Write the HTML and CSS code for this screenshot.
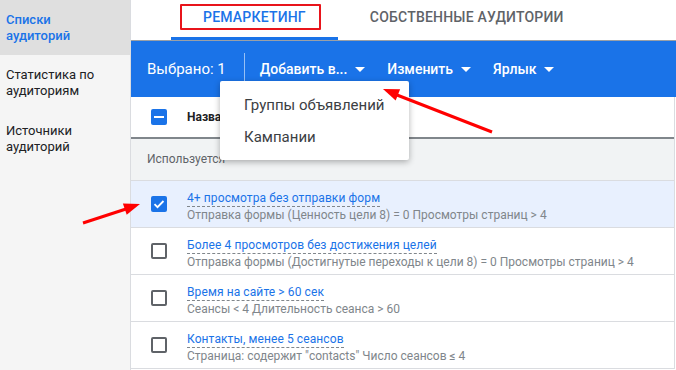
FILE: index.html
```html
<!DOCTYPE html>
<html lang="ru">
<head>
  <meta charset="UTF-8">
  <meta name="viewport" content="width=device-width, initial-scale=1.0">
  <title>Аудитории</title>
  <link rel="stylesheet" href="styles.css">
</head>
<body>
  <div class="page">
    <aside class="sidebar">
      <div class="nav-item active">Списки<br>аудиторий</div>
      <div class="nav-item">Статистика по<br>аудиториям</div>
      <div class="nav-item">Источники<br>аудиторий</div>
    </aside>

    <main class="main">
      <div class="tabs">
        <div class="tab active">Ремаркетинг<span class="mark-box"></span></div>
        <div class="tab">Собственные аудитории</div>
      </div>

      <div class="toolbar">
        <span class="selected-count">Выбрано: 1</span>
        <span class="divider"></span>
        <div class="tb-btn first">Добавить в...<span class="caret"></span></div>
        <div class="tb-btn">Изменить<span class="caret"></span></div>
        <div class="tb-btn">Ярлык<span class="caret"></span></div>

        <div class="dropdown">
          <div class="dropdown-item">Группы объявлений</div>
          <div class="dropdown-item">Кампании</div>
        </div>
      </div>

      <div class="table">
        <div class="row head">
          <span class="checkbox partial"></span>
          <span class="col-name">Название</span>
        </div>
        <div class="group">Используется</div>

        <div class="row item selected">
          <span class="checkbox checked">
            <svg viewBox="0 0 16 16" width="16" height="16"><path d="M3.5 8.2l3 3 6-6.2" fill="none" stroke="#fff" stroke-width="1.8"/></svg>
          </span>
          <div class="item-text">
            <span class="item-title">4+ просмотра без отправки форм</span>
            <div class="item-sub">Отправка формы (Ценность цели 8) = 0 Просмотры страниц &gt; 4</div>
          </div>
        </div>

        <div class="row item">
          <span class="checkbox"></span>
          <div class="item-text">
            <span class="item-title">Более 4 просмотров без достижения целей</span>
            <div class="item-sub">Отправка формы (Достигнутые переходы к цели 8) = 0 Просмотры страниц &gt; 4</div>
          </div>
        </div>

        <div class="row item">
          <span class="checkbox"></span>
          <div class="item-text">
            <span class="item-title">Время на сайте &gt; 60 сек</span>
            <div class="item-sub">Сеансы &lt; 4 Длительность сеанса &gt; 60</div>
          </div>
        </div>

        <div class="row item">
          <span class="checkbox"></span>
          <div class="item-text">
            <span class="item-title">Контакты, менее 5 сеансов</span>
            <div class="item-sub">Страница: содержит "contacts" Число сеансов ≤ 4</div>
          </div>
        </div>
      </div>
    </main>
  </div>

  <!-- red annotation arrows -->
  <svg class="annotations" width="676" height="370" viewBox="0 0 676 370">
    <line x1="492" y1="132" x2="397" y2="95" stroke="#f00" stroke-width="3"/>
    <polygon points="383,89 400.1,89.3 395.7,100.5" fill="#f00"/>
    <line x1="83" y1="223" x2="126" y2="209" stroke="#f00" stroke-width="3"/>
    <polygon points="140,204 126.7,214.8 122.9,203.4" fill="#f00"/>
  </svg>
</body>
</html>
```

FILE: styles.css
```css
body {
  margin: 0;
  font-family: Roboto, "Liberation Sans", Arial, sans-serif;
  color: #202124;
  background-color: #fff;
  overflow: hidden;
}
.page {
  display: flex;
  width: 676px;
  height: 370px;
}
.sidebar {
  width: 130px;
  flex-shrink: 0;
  background-color: #f5f5f5;
}
.nav-item {
  padding: 12px 6px;
  font-size: 13px;
  line-height: 16px;
  color: #202124;
}
.nav-item.active {
  background-color: #dfdfdf;
  color: #1a73e8;
  font-weight: 500;
  padding-bottom: 11px;
}
.main {
  flex: 1;
  border-left: 1px solid #dadce0;
  min-width: 0;
}
.tabs {
  display: flex;
  height: 40px;
  padding-left: 40px;
  border-bottom: 1px solid #9aa0a6;
}
.tab {
  position: relative;
  padding: 9px 32px 0;
  font-size: 14px;
  font-weight: 500;
  line-height: 16px;
  letter-spacing: 0.2px;
  text-transform: uppercase;
  color: #5f6368;
  box-sizing: border-box;
}
.tab.active {
  color: #1a73e8;
  border-bottom: 3px solid #1a73e8;
}
.mark-box {
  position: absolute;
  left: 9px;
  top: 4px;
  width: 137px;
  height: 22px;
  border: 2px solid #e8141b;
  border-radius: 1px;
}
.toolbar {
  position: relative;
  display: flex;
  align-items: center;
  height: 56px;
  padding-left: 16px;
  background-color: #1a73e8;
  color: #fff;
}
.selected-count {
  font-size: 15px;
}
.divider {
  width: 1px;
  height: 32px;
  margin-left: 18px;
  background-color: rgba(255, 255, 255, 0.55);
}
.tb-btn {
  display: flex;
  align-items: center;
  padding: 0 11px;
  font-size: 14px;
  font-weight: 500;
}
.tb-btn.first {
  margin-left: 4px;
}
.caret {
  width: 0;
  height: 0;
  margin-left: 8px;
  border-left: 5px solid transparent;
  border-right: 5px solid transparent;
  border-top: 5px solid #fff;
}
.dropdown {
  position: absolute;
  left: 89px;
  top: 40px;
  width: 189px;
  padding: 8px 0 7px;
  background-color: #fff;
  border-radius: 2px;
  box-shadow: 0 2px 6px rgba(0, 0, 0, 0.3);
  z-index: 2;
}
.dropdown-item {
  padding: 0 24px;
  height: 32px;
  line-height: 32px;
  font-size: 15px;
  color: #3c4043;
}
.table {
  margin-right: 1px;
  border-right: 1px solid #dadce0;
}
.row {
  display: flex;
  align-items: center;
  padding-left: 20px;
}
.row.head {
  height: 40px;
  border-bottom: 2px solid #80868b;
}
.col-name {
  margin-left: 20px;
  font-size: 12px;
  font-weight: 700;
  color: #202124;
}
.group {
  height: 41px;
  line-height: 41px;
  padding-left: 16px;
  font-size: 12px;
  color: #5f6368;
  background-color: #f1f3f4;
  border-bottom: 1px solid #dadce0;
}
.row.item {
  height: 46px;
  border-bottom: 1px solid #dadce0;
}
.row.item.selected {
  background-color: #e8f0fe;
}
.checkbox {
  width: 16px;
  height: 16px;
  box-sizing: border-box;
  border: 2px solid #5f6368;
  border-radius: 2px;
  flex-shrink: 0;
}
.checkbox.checked,
.checkbox.partial {
  position: relative;
  border: none;
  background-color: #1a73e8;
}
.checkbox.checked svg {
  display: block;
}
.checkbox.partial::after {
  content: "";
  position: absolute;
  left: 3px;
  right: 3px;
  top: 7px;
  height: 2px;
  background-color: #fff;
}
.item-text {
  margin-left: 20px;
  padding-top: 1px;
}
.item-title {
  display: inline-block;
  font-size: 12px;
  line-height: 15px;
  letter-spacing: 0.1px;
  color: #1a73e8;
  border-bottom: 1px dashed #80868b;
}
.item-sub {
  font-size: 12px;
  line-height: 16px;
  color: #80868b;
  white-space: nowrap;
}
.annotations {
  position: absolute;
  left: 0;
  top: 0;
  pointer-events: none;
  z-index: 5;
}
```
